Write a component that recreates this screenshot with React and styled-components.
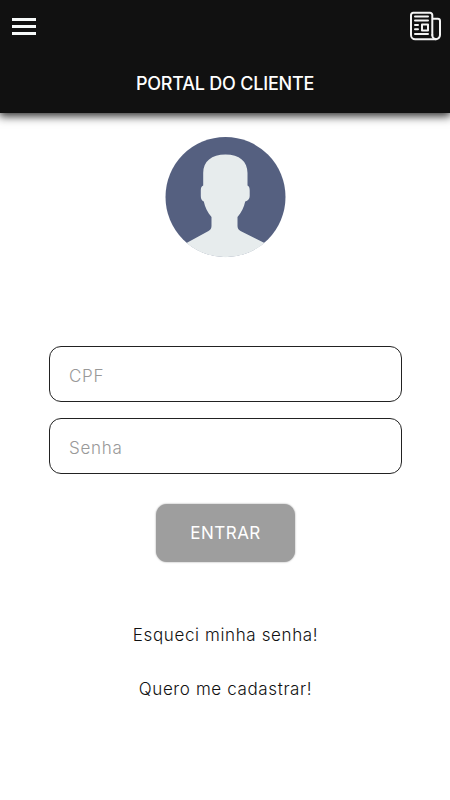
import styled, { createGlobalStyle } from "styled-components";

const GlobalStyle = createGlobalStyle`
    * {
        box-sizing: border-box;
    }
    body {
        margin: 0;
        background: #fff;
        font-family: Inter, "Open Sans", sans-serif;
    }
`;

const StyledPage = styled.div`
    min-height: 800px;
    display: flex;
    flex-direction: column;
`;

const StyledHeader = styled.header`
    height: 112.5px;
    background: #111;
    color: #fff;
    box-shadow: 0 2px 9px 1px rgba(0, 0, 0, 0.85);
`;

const StyledBar = styled.div`
    display: flex;
    justify-content: space-between;
    align-items: flex-start;
    height: 70px;
    padding: 11px 9px 0 12px;
`;

const StyledIconButton = styled.button`
    display: flex;
    padding: 0;
    border: 0;
    background: none;
    color: #fff;
`;

const StyledMenu = styled(StyledIconButton)`
    flex-direction: column;
    gap: 4px;
    padding-top: 7px;
    span {
        width: 24px;
        height: 3px;
        background: #f7fafa;
    }
`;

const StyledTitle = styled.h1`
    margin: 0;
    text-align: center;
    font-size: 18px;
    font-weight: 500;
    line-height: 27px;
    letter-spacing: -0.22px;
`;

const StyledMain = styled.main`
    display: flex;
    flex-direction: column;
    align-items: center;
    padding: 24px 48px 0 49px;
`;

const StyledAvatar = styled.svg`
    display: block;
    width: 120px;
    height: 120px;
    overflow: visible;
`;

const StyledForm = styled.form`
    width: 353px;
    margin-top: 89px;
    display: flex;
    flex-direction: column;
    align-items: center;
    gap: 16px;
`;

const StyledInput = styled.input`
    width: 100%;
    height: 56px;
    padding: 5px 19px 0;
    border: 1px solid #222;
    border-radius: 12px;
    background: #fff;
    font-family: inherit;
    font-size: 17px;
    font-weight: 300;
    letter-spacing: ${({ $spacing }) => $spacing};
    outline: none;
    &::placeholder {
        color: #999;
        opacity: 1;
    }
`;

const StyledSubmit = styled.button`
    width: 139px;
    height: 58px;
    margin-top: 14px;
    padding: 1px 0 0;
    border: 0;
    border-radius: 11px;
    background: #9e9e9e;
    box-shadow: 0 0 2px rgba(0, 0, 0, 0.4);
    color: #fff;
    font-family: inherit;
    font-size: 17px;
    letter-spacing: 0.5px;
`;

const StyledLinks = styled.nav`
    margin-top: 60px;
    display: flex;
    flex-direction: column;
    align-items: center;
    gap: 28px;
`;

const StyledLink = styled.a`
    color: #111;
    font-size: 17px;
    font-weight: 300;
    line-height: 26px;
    letter-spacing: 0.62px;
    text-decoration: none;
    white-space: nowrap;
`;

const NewsIcon = () => (
    <svg
        width="31"
        height="30"
        viewBox="0 0 31 30"
        fill="none"
        stroke="#f4f4f4"
        strokeWidth="2"
        strokeLinecap="round"
        strokeLinejoin="round"
    >
        <path d="M22.300 24V4A2.200 2.200 0 0 0 20 1.800H3.200A2.200 2.200 0 0 0 1 4v20a4.200 4.200 0 0 0 4.200 4.200h20.500A4.200 4.200 0 0 0 30 24V10a2.200 2.200 0 0 0-2.200-2.200h-5.500" />
        <path d="M22.300 24a4 4 0 0 0 3.700 4.200" />
        <path d="M5 5.500h13M5 9.500h13M5 14h3M5 18.300h3M5 23h13" />
        <path d="M12 13.500h6v6h-6z" />
    </svg>
);

const Avatar = () => (
    <StyledAvatar viewBox="0 0 120 120">
        <circle cx="59.5" cy="60" r="60" fill="#556080" />
        <path
            fill="#e7eced"
            d="M59.500 17.500c-14 0-22.300 7-22.300 18.500v12.500c-1.800.6-2.400 2.500-2.400 5v5.500c0 3 1 4.500 3 5.500 1.200 6 3.800 10.800 7.700 15.500v9c0 2.400-1 3.800-3 5L20.500 105.900a60.300 60.300 0 0 0 78 0L74.500 94c-2-1.200-3-2.600-3-5v-9c3.900-4.700 6.500-9.500 7.700-15.500 2.800-1 4.500-2.500 4.500-5.500v-5.500c0-2.500-.6-4.400-2.200-5V36c0-11.500-8-18.500-22-18.500z"
        />
    </StyledAvatar>
);

const App = () => {
    return (
        <>
            <GlobalStyle />
            <StyledPage>
                <StyledHeader>
                    <StyledBar>
                        <StyledMenu aria-label="Menu">
                            <span />
                            <span />
                            <span />
                        </StyledMenu>
                        <StyledIconButton aria-label="Notícias">
                            <NewsIcon />
                        </StyledIconButton>
                    </StyledBar>
                    <StyledTitle>PORTAL DO CLIENTE</StyledTitle>
                </StyledHeader>
                <StyledMain>
                    <Avatar />
                    <StyledForm>
                        <StyledInput placeholder="CPF" $spacing="0.7px" />
                        <StyledInput type="password" placeholder="Senha" $spacing="0.75px" />
                        <StyledSubmit type="button">ENTRAR</StyledSubmit>
                    </StyledForm>
                    <StyledLinks>
                        <StyledLink href="#">Esqueci minha senha!</StyledLink>
                        <StyledLink href="#">Quero me cadastrar!</StyledLink>
                    </StyledLinks>
                </StyledMain>
            </StyledPage>
        </>
    );
};

export default App;
